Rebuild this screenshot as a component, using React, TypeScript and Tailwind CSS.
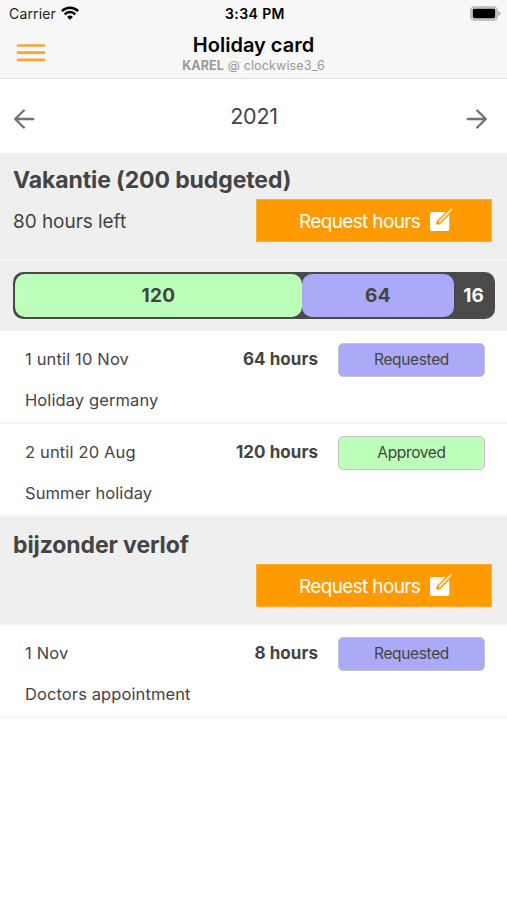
import React from 'react';

type Status = 'Requested' | 'Approved';

interface Leave {
  period: string;
  hours: number;
  status: Status;
  description: string;
}

const vacation: Leave[] = [
  { period: '1 until 10 Nov', hours: 64, status: 'Requested', description: 'Holiday germany' },
  { period: '2 until 20 Aug', hours: 120, status: 'Approved', description: 'Summer holiday' },
];

const special: Leave[] = [
  { period: '1 Nov', hours: 8, status: 'Requested', description: 'Doctors appointment' },
];

function WifiIcon() {
  return (
    <svg className="-mt-px h-[14px] w-[18px]" viewBox="0 0 18 14" fill="none" stroke="#000" strokeWidth="2.5">
      <path d="M.9 5.1a11.5 11.5 0 0 1 16.200 0" />
      <path d="M3.700 8.300a7.500 7.500 0 0 1 10.600 0" />
      <path d="M6.100 10.900a4.200 4.200 0 0 1 5.800 0L9 13.800z" fill="#000" stroke="none" />
    </svg>
  );
}

function BatteryIcon() {
  return (
    <svg className="-mt-[2px] h-[15px] w-[31px]" viewBox="0 0 31 15">
      <rect x="0.9" y="0.9" width="26.2" height="13.2" rx="3.6" fill="#dcdcdc" stroke="#b4b4b4" strokeWidth="1.5" />
      <rect x="2.8" y="2.8" width="22.4" height="9.4" rx="1.4" fill="#000" />
      <path d="M28.4 5v5c1.3-.5 2-1.400 2-2.500S29.700 5.500 28.400 5z" fill="#a8a8a8" />
    </svg>
  );
}

function MenuIcon() {
  return (
    <svg className="h-[19px] w-[30px]" viewBox="0 0 30 19" stroke="#f5a734" strokeWidth="2.7" strokeLinecap="round">
      <path d="M2 2.500h26M2 9.700h26M2 16.900h26" />
    </svg>
  );
}

function ArrowIcon({ className }: { className?: string }) {
  return (
    <svg
      className={`h-5 w-[22px] ${className ?? ''}`}
      viewBox="0 0 22 20"
      fill="none"
      stroke="#737373"
      strokeWidth="2.4"
      strokeLinecap="round"
      strokeLinejoin="round"
    >
      <path d="M10.800 1.500 2.200 10l8.600 8.500M2.400 10h17.800" />
    </svg>
  );
}

function ComposeIcon() {
  return (
    <svg className="-mt-px h-6 w-6" viewBox="0 0 24 24" fill="none" strokeLinecap="round">
      <rect x="1" y="4" width="19.300" height="19" rx="2.600" fill="#fff" />
      <path d="M9.600 14.400 20.600 3.400" stroke="#ff9b00" strokeWidth="4.600" />
      <path d="M8.300 15.700 9 13.100" stroke="#ff9b00" strokeWidth="1.600" />
      <path d="M10.500 13.500 22.300 1.700" stroke="#ffe9c6" strokeWidth="1.900" />
    </svg>
  );
}

function RequestButton() {
  return (
    <button
      type="button"
      className="flex h-[43px] w-[236px] items-center border border-[#ffab2e] bg-[#ff9b00] pl-[42px] text-white"
    >
      <span className="w-[130px] pt-[3px] text-left text-[19px] whitespace-nowrap tracking-[-0.65px]">Request hours</span>
      <ComposeIcon />
    </button>
  );
}

function SectionHeader({ title, subtitle }: { title: string; subtitle?: string }) {
  return (
    <div className="h-[106px] bg-[#efefef] pt-[11px] pr-[15px] pl-[13px]">
      <h2 className="h-[35px] text-[23px] leading-[32px] font-bold tracking-[-0.1px]">{title}</h2>
      <div className="flex items-center justify-between">
        <span className="pt-[3px] text-[19px] tracking-[-0.05px]">{subtitle}</span>
        <RequestButton />
      </div>
    </div>
  );
}

function LeaveRow({ leave }: { leave: Leave }) {
  const color = leave.status === 'Approved' ? 'bg-[#bbffb8]' : 'bg-[#aaaaf8]';
  return (
    <div className="h-[93px] border-b-2 border-[#f5f5f5] pt-[12px] pr-[22px] pl-[25px]">
      <div className="flex h-[34px] items-center">
        <span className="-mt-px flex-1 text-[16.500px] tracking-[0.15px]">{leave.period}</span>
        <span className="-mt-px mr-[20px] text-[17px] font-bold tracking-[0.05px]">{leave.hours} hours</span>
        <span
          className={`flex h-[34px] w-[147px] items-center justify-center rounded-[5px] border border-[#c4c4c8] text-[15.500px] tracking-[-0.35px] ${color}`}
        >
          {leave.status}
        </span>
      </div>
      <p className="mt-[11px] text-[16.500px] leading-[24px] tracking-[0.1px]">{leave.description}</p>
    </div>
  );
}

export default function App() {
  return (
    <main className="h-[900px] w-[507px] overflow-hidden bg-white font-['Inter',sans-serif] text-[#444]">
      <header className="h-[79px] border-b border-[#e0e0e0] bg-[#f7f7f7] text-black">
        <div className="grid h-[28px] grid-cols-3 items-center pr-[6px] pl-[9px] text-[14px]">
          <div className="-mt-px flex items-center gap-[5px]">
            <span className="tracking-[0.15px] text-[#222]">Carrier</span>
            <WifiIcon />
          </div>
          <span className="-mt-px text-center font-semibold tracking-[0.4px]">3:34 PM</span>
          <div className="flex justify-end">
            <BatteryIcon />
          </div>
        </div>
        <div className="grid grid-cols-[60px_1fr_60px]">
          <div className="pt-[15px] pl-4">
            <MenuIcon />
          </div>
          <div className="text-center">
            <h1 className="mt-[4px] text-[20px] leading-[26px] font-semibold">Holiday card</h1>
            <p className="text-[12.500px] leading-[16px] tracking-[0.15px] text-[#999]">
              <b>KAREL</b> @ clockwise3_6
            </p>
          </div>
        </div>
      </header>

      <nav className="flex h-[74px] items-center justify-between pr-[19px] pl-[13px]">
        <ArrowIcon className="mt-[6px]" />
        <span className="pt-px pl-[7px] text-[21.500px] tracking-[-0.2px]">2021</span>
        <ArrowIcon className="mt-[6px] rotate-180" />
      </nav>

      <section>
        <SectionHeader title="Vakantie (200 budgeted)" subtitle="80 hours left" />
        <div className="h-[72px] border-t-2 border-[#f7f7f7] bg-[#efefef] pt-[11px] pr-[12px] pl-[13px]">
          <div className="flex h-[47px] items-stretch rounded-[10px] bg-[#4a4a4a] p-[2px] text-[19px] font-bold">
            <div className="flex w-[287px] items-center justify-center rounded-[10px] bg-[#bbffb8] pt-px tracking-[0.4px]">
              120
            </div>
            <div className="flex w-[152px] items-center justify-center rounded-[10px] bg-[#aaaaf8] pt-px tracking-[0.4px]">
              64
            </div>
            <div className="flex flex-1 items-center justify-center pt-px text-white">16</div>
          </div>
        </div>
        {vacation.map((leave) => (
          <LeaveRow key={leave.period} leave={leave} />
        ))}
      </section>

      <section>
        <div className="h-px bg-[#efefef]" />
        <SectionHeader title="bijzonder verlof" />
        <div className="h-px bg-[#f7f7f7]" />
        {special.map((leave) => (
          <LeaveRow key={leave.period} leave={leave} />
        ))}
      </section>
    </main>
  );
}
